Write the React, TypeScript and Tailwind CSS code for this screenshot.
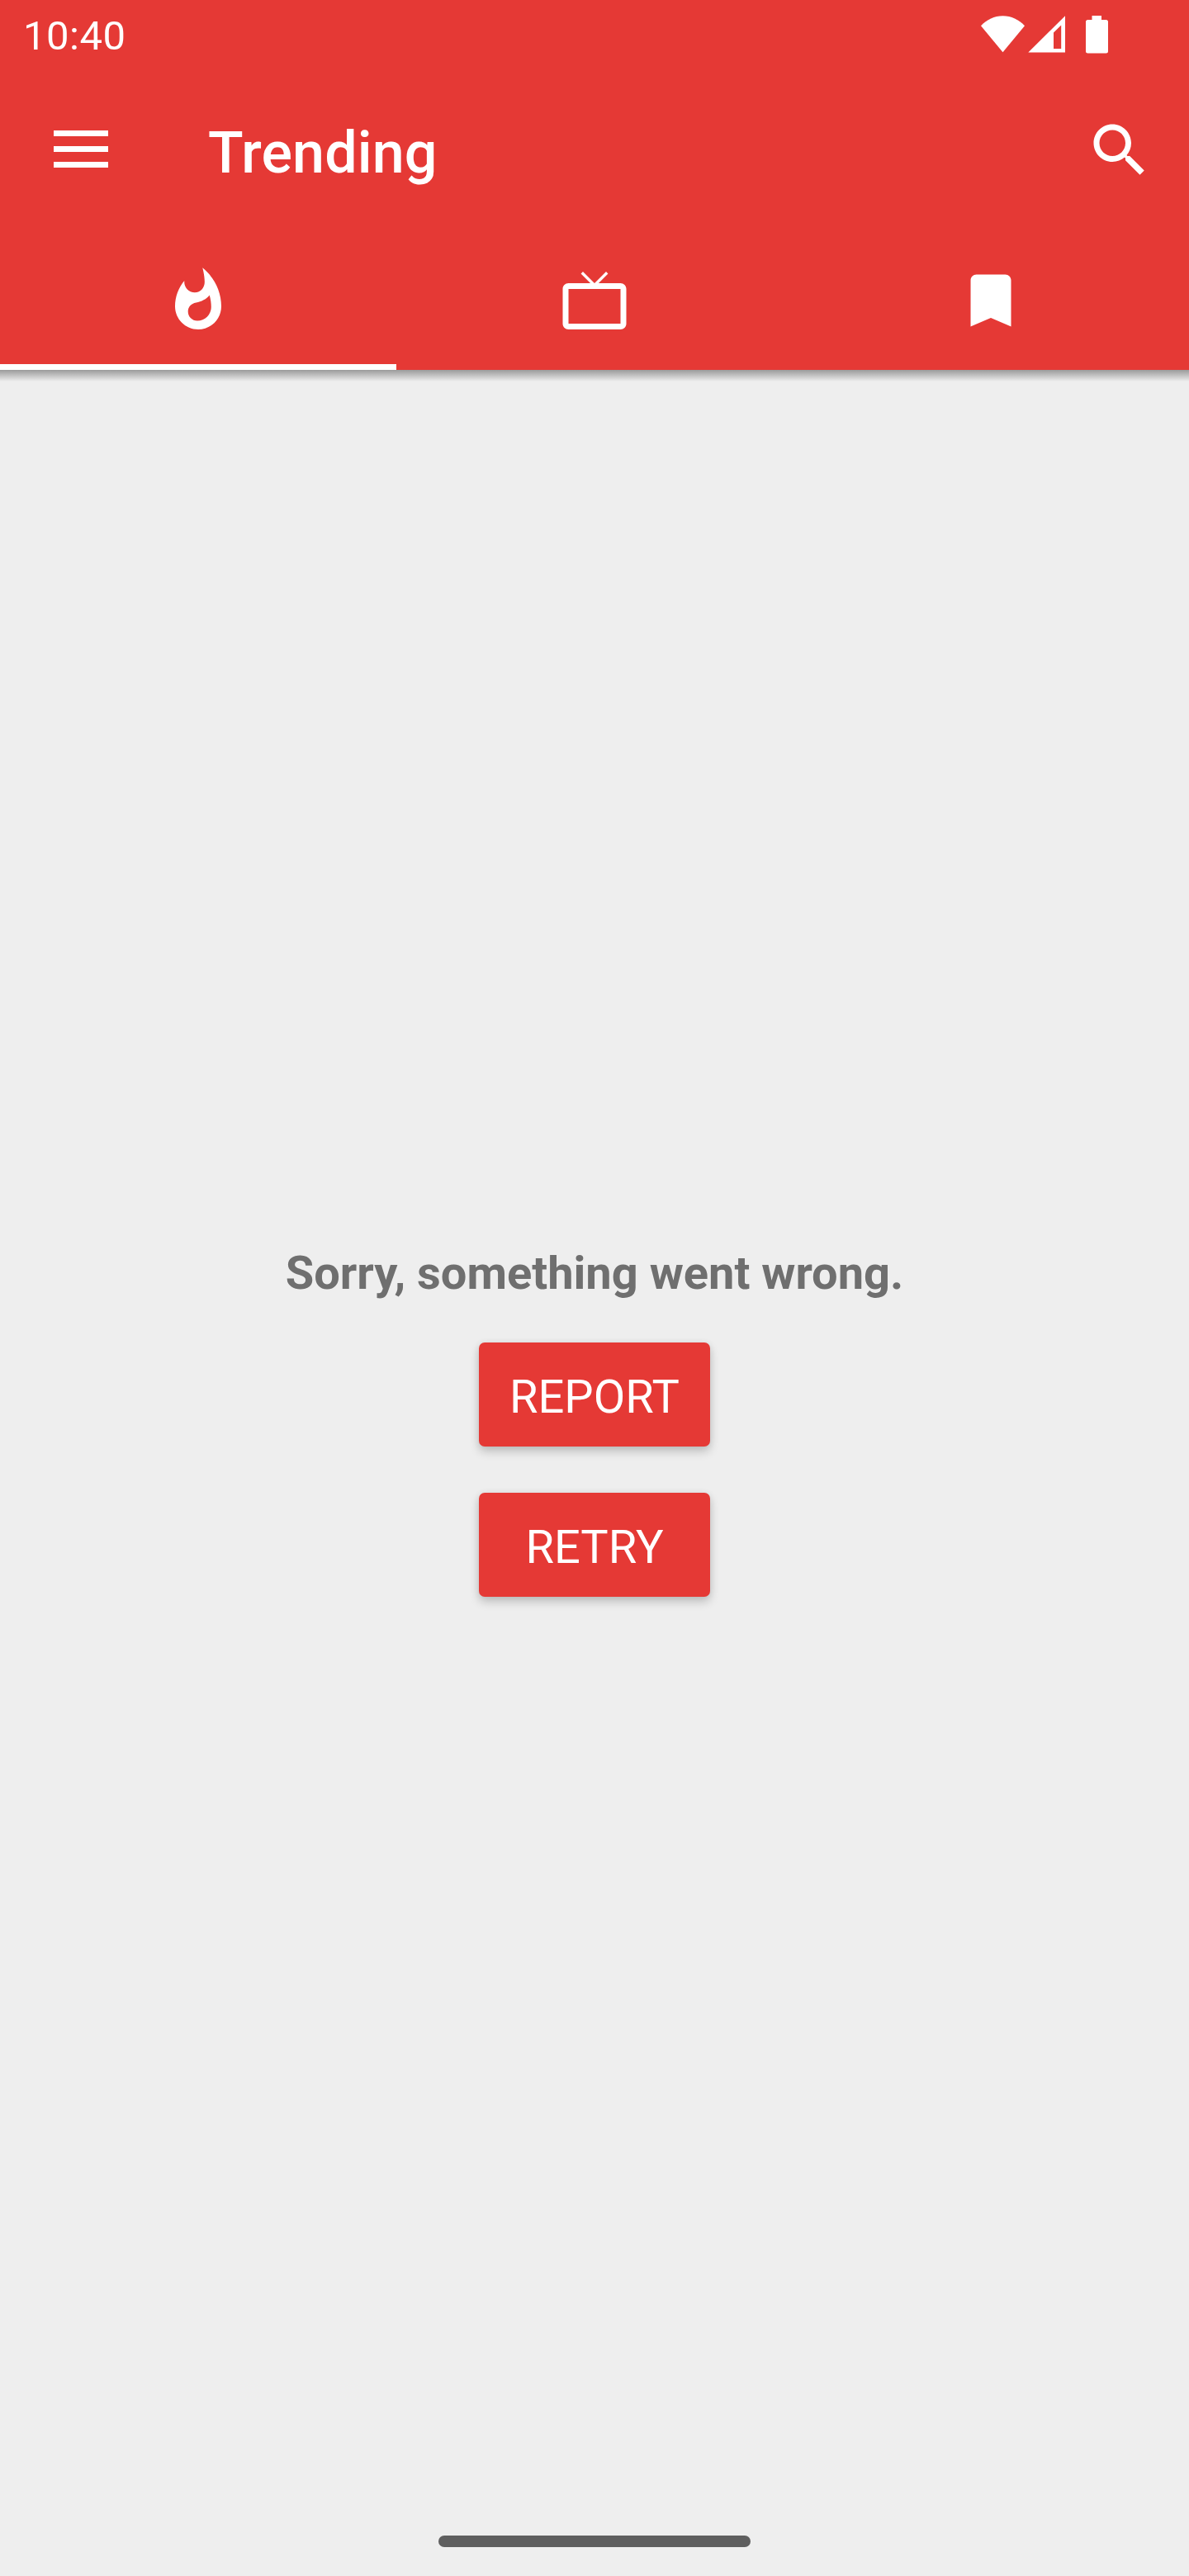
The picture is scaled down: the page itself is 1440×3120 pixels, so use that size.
import React from "react";

function StatusBar() {
  return (
    <div className="flex h-[84px] items-start justify-between pl-[28px] pr-[97px]">
      <span className="mt-[15px] text-[49px] leading-[58px] tracking-[0.5px]">10:40</span>
      <svg className="mt-[14px] h-[56px] w-[160px]" viewBox="1183 14 160 56" fill="currentColor" aria-label="Wi-Fi, mobile signal, battery">
        <path d="M1214.5 63.3L1188 31.2C1195 23.7 1204.3 19.2 1214.5 19.2S1234 23.7 1241 31.2Z" />
        <path fillRule="evenodd" d="M1245.3 63.5L1290 19.3V63.5ZM1276 39.5V59H1285.2V30.5Z" />
        <path d="M1322.5 19H1334V24H1339.5Q1342 24 1342 26.5V62Q1342 64.5 1339.5 64.5H1317.5Q1315 64.5 1315 62V26.5Q1315 24 1317.5 24H1322.5Z" />
      </svg>
    </div>
  );
}

function Toolbar() {
  return (
    <div className="flex h-[196px] items-center pl-[65px] pr-[42px]">
      <button className="flex w-[66px] flex-col gap-[12px] pb-[3px]" aria-label="Menu">
        <span className="h-[7px] w-full bg-white" />
        <span className="h-[7px] w-full bg-white" />
        <span className="h-[7px] w-full bg-white" />
      </button>
      <h1 className="ml-[121px] flex-1 pt-[6px] text-[70px] leading-[82px] font-medium tracking-[0.1px]">Trending</h1>
      <button aria-label="Search" className="size-[84px]">
        <svg viewBox="0 0 24 24" fill="currentColor" className="size-[84px]">
          <path d="M15.5 14h-.79l-.28-.27C15.41 12.59 16 11.11 16 9.5 16 5.91 13.09 3 9.5 3S3 5.91 3 9.5 5.91 16 9.5 16c1.61 0 3.09-.59 4.23-1.57l.27.28v.79l5 4.99L20.49 19l-4.99-5zm-6 0C7.01 14 5 11.99 5 9.5S7.01 5 9.5 5 14 7.01 14 9.5 11.99 14 9.5 14z" />
        </svg>
      </button>
    </div>
  );
}

const tabs = [
  {
    label: "Trending",
    active: true,
    path: "M13.5.67s.74 2.65.74 4.8c0 2.06-1.35 3.73-3.41 3.73-2.07 0-3.63-1.67-3.63-3.73l.03-.36C5.21 7.51 4 10.62 4 14c0 4.42 3.58 8 8 8s8-3.58 8-8C20 8.61 17.41 3.8 13.5.67zM11.71 19c-1.78 0-3.22-1.4-3.22-3.14 0-1.62 1.05-2.76 2.81-3.12 1.77-.36 3.6-1.21 4.62-2.58.39 1.29.59 2.65.59 4.04 0 2.65-2.15 4.8-4.8 4.8z",
  },
  {
    label: "Subscriptions",
    active: false,
    path: "M21 6h-7.59l3.29-3.29L16 2l-4 4-4-4-.7.71L10.59 6H3c-1.1 0-2 .89-2 2v12c0 1.1.9 2 2 2h18c1.1 0 2-.9 2-2V8c0-1.11-.9-2-2-2zm0 14H3V8h18v12z",
  },
  {
    label: "Bookmarks",
    active: false,
    path: "M17 3H7c-1.1 0-1.99.9-1.99 2L5 21l7-3 7 3V5c0-1.1-.9-2-2-2z",
  },
];

function TabBar() {
  return (
    <nav className="grid h-[168px] grid-cols-3">
      {tabs.map((tab) => (
        <button
          key={tab.label}
          aria-label={tab.label}
          className={
            tab.active
              ? "flex items-center justify-center border-b-[7px] border-white pt-[7px]"
              : "flex items-center justify-center"
          }
        >
          <svg viewBox="0 0 24 24" fill="currentColor" className="size-[84px]">
            <path d={tab.path} />
          </svg>
        </button>
      ))}
    </nav>
  );
}

function ActionButton({ children }: { children: React.ReactNode }) {
  return (
    <button className="flex h-[126px] w-[280px] items-center justify-center rounded-[7px] bg-[#e53935] pt-[5px] text-[56px] leading-[66px] text-white shadow-[0_6px_12px_rgba(0,0,0,0.2),0_0_8px_rgba(0,0,0,0.06)]">
      {children}
    </button>
  );
}

export default function App() {
  return (
    <div className="flex h-[3120px] w-[1440px] flex-col overflow-hidden bg-[#eeeeee] font-['Roboto',sans-serif]">
      <header className="bg-[#e53935] text-white">
        <StatusBar />
        <Toolbar />
        <TabBar />
      </header>
      <div className="h-[14px] bg-linear-to-b from-[#9b9b9b] to-[#eeeeee]" />
      <main className="flex flex-1 flex-col items-center pt-[1047px]">
        <p className="text-[56px] leading-[66px] font-bold text-[#6f6f6f]">Sorry, something went wrong.</p>
        <div className="mt-[51px] flex flex-col gap-[56px]">
          <ActionButton>REPORT</ActionButton>
          <ActionButton>RETRY</ActionButton>
        </div>
      </main>
      <div className="flex justify-center pb-[35px]">
        <div className="h-[14px] w-[378px] rounded-full bg-[#5f5f5f]" />
      </div>
    </div>
  );
}
